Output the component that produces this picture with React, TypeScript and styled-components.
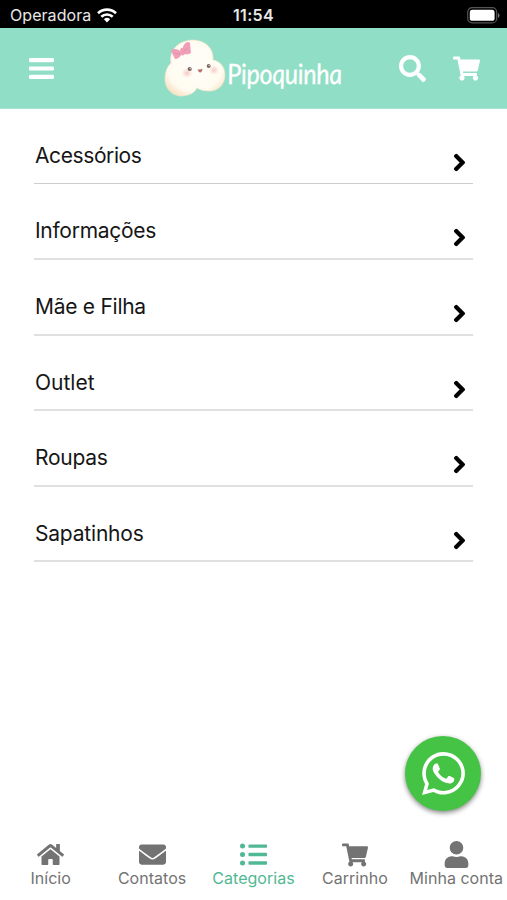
import React from 'react';
import styled, { createGlobalStyle } from 'styled-components';
import { FaSearch, FaShoppingCart, FaHome, FaEnvelope, FaListUl, FaUser, FaWhatsapp, FaChevronRight } from 'react-icons/fa';

const GlobalStyle = createGlobalStyle`
  * { box-sizing: border-box; }
  body { margin: 0; background: #fff; font-family: Inter, "Liberation Sans", sans-serif; }
`;

const Screen = styled.div`
  position: relative;
  display: flex;
  flex-direction: column;
  width: 507px;
  height: 900px;
  overflow: hidden;
  background: #fff;
`;

const StatusBar = styled.div`
  display: grid;
  grid-template-columns: 1fr auto 1fr;
  align-items: center;
  height: 28px;
  padding: 2px 7px 0 10px;
  background: #000;
  color: #e8e8e8;
`;

const Carrier = styled.div`
  display: flex;
  align-items: center;
  gap: 6px;
  font-size: 16px;
  letter-spacing: 0.06px;
`;

const Clock = styled.div`
  font-size: 16px;
  font-weight: 600;
  letter-spacing: 0.35px;
  margin-right: 3px;
`;

const BatterySlot = styled.div`
  display: flex;
  justify-content: flex-end;
`;

const Header = styled.header`
  display: flex;
  align-items: center;
  height: 81px;
  padding: 0 27px 0 28px;
  background: #90dec5;
  border-bottom: 1px solid #a8e5d1;
  color: #fff;
`;

const Logo = styled.div`
  display: flex;
  align-items: center;
  margin-left: 107px;
  flex: 1;
`;

const Wordmark = styled.span`
  font-family: Lato, "Liberation Sans", sans-serif;
  font-size: 28px;
  font-style: italic;
  line-height: 40px;
  letter-spacing: -0.4px;
  white-space: nowrap;
  width: 128px;
  margin: 10px -14px 0 -1px;
  transform-origin: 0 75%;
  transform: scaleX(0.9) skewX(6deg);
  -webkit-text-stroke: 0.3px #fff;
`;

const HeaderActions = styled.div`
  display: flex;
  align-items: center;
  gap: 27px;
`;

const CategoryList = styled.main`
  display: flex;
  flex: 1;
  flex-direction: column;
  padding: 0 34px;
`;

const Category = styled.div`
  display: flex;
  justify-content: space-between;
  height: 75.5px;
  padding: 34px 4px 0 1px;
  border-bottom: 2px solid #e0e0e0;
  color: #161616;

  &:first-child {
    height: 75px;
    border-bottom: 1px solid #cecece;
  }

  &:nth-child(2) {
    height: 76px;
  }
`;

const CategoryName = styled.span<{ $spacing: number }>`
  font-size: 21px;
  line-height: 26px;
  letter-spacing: ${(p) => p.$spacing}px;
`;

const Arrow = styled(FaChevronRight)`
  width: 19px;
  height: 19px;
  margin-top: 10px;
  color: #000;
  overflow: visible;
  stroke: #000;
  stroke-width: 34px;
  stroke-linejoin: round;
`;

const ChatButton = styled.div`
  position: absolute;
  left: 405px;
  top: 736px;
  display: grid;
  place-items: center;
  width: 76px;
  height: 75px;
  border-radius: 50%;
  background: #45c344;
  box-shadow: 0 2px 5px rgba(0, 0, 0, 0.48);
  color: #fff;
`;

const TabBar = styled.nav`
  display: grid;
  grid-template-columns: repeat(5, 1fr);
  height: 67px;
  padding-top: 7px;
`;

const Tab = styled.div<{ $active?: boolean }>`
  display: flex;
  flex-direction: column;
  align-items: center;
  color: ${(p) => (p.$active ? '#51b894' : '#737373')};
`;

const TabIcon = styled.div`
  display: grid;
  place-items: center;
  height: 29px;
`;

const TabLabel = styled.span`
  font-size: 16px;
  line-height: 19px;
  white-space: nowrap;
  letter-spacing: 0.03px;
`;

const MenuIcon = () => (
  <svg width="27" height="27" viewBox="0 0 27 27" fill="#fff">
    <rect x="1" y="3" width="25" height="4.2" rx="1.3" />
    <rect x="1" y="11.4" width="25" height="4.2" rx="1.3" />
    <rect x="1" y="19.8" width="25" height="4.2" rx="1.3" />
  </svg>
);

const Wifi = () => (
  <svg width="20" height="15" viewBox="0 0 20 15">
    <g fill="none" stroke="#fff" strokeWidth="2.7">
      <path d="M1 5.2a13 13 0 0 1 18 0" />
      <path d="M4.3 8.8a8.2 8.2 0 0 1 11.4 0" />
    </g>
    <path d="M6.9 11.2a4.6 4.6 0 0 1 6.2 0L10 14.6z" fill="#fff" />
  </svg>
);

const Battery = () => (
  <svg width="33" height="17" viewBox="0 0 33 17">
    <rect x=".7" y=".7" width="29" height="15.2" rx="4.5" fill="none" stroke="#555" strokeWidth="1.2" />
    <rect x="2.8" y="2.8" width="24.8" height="11" rx="2.6" fill="#fff" />
    <path d="M31 6v5c2-1 2-4 0-5z" fill="#777" />
  </svg>
);

const Popcorn = () => (
  <svg width="67" height="66" viewBox="162 35 67 66" role="img" aria-label="Pipoquinha">
    <defs>
      <radialGradient id="puff" cx=".5" cy=".45" r=".6">
        <stop offset="0" stopColor="#fffef9" />
        <stop offset=".78" stopColor="#fffbf0" />
        <stop offset="1" stopColor="#f8e5c8" />
      </radialGradient>
      <radialGradient id="blush">
        <stop offset="0" stopColor="#f7b9b9" stopOpacity=".8" />
        <stop offset="1" stopColor="#f7c9c5" stopOpacity="0" />
      </radialGradient>
    </defs>
    <path d="M171 63C169 50 178 41 192 40c14 0 22 9 21 20 7 1 12 7 12 15 0 10-8 17-17 16-4 0-8-1-11-3-3 6-10 8-17 8-9-1-15-8-15-17 0-7 2-12 6-16z" fill="url(#puff)" stroke="#f3e4c9" strokeWidth=".7" />
    <ellipse cx="187" cy="73" rx="6" ry="5" fill="url(#blush)" />
    <ellipse cx="214" cy="70" rx="5" ry="5" fill="url(#blush)" />
    <circle cx="189.7" cy="69" r="2.1" fill="#7d6861" />
    <circle cx="208.7" cy="66" r="2" fill="#7d6861" />
    <circle cx="190.2" cy="68.3" r=".6" fill="#fff" />
    <circle cx="209.2" cy="65.3" r=".6" fill="#fff" />
    <path d="M197.5 69.2q2.5 1 5-.7-.4 4-2.3 4-1.8-.4-2.7-3.3z" fill="#b87369" />
    <path d="M180 51c-2-2-7-3-9 0l4 8c3 0 5-2 6-4 2 1 3 0 4-1 2 1 4 0 6-1l-1-10c-3-3-7 2-7 5-1-1-3 0-3 3z" fill="#ef9fb8" />
    <path d="M175 53l5 1.5m4-3l4-4" stroke="#e288a8" strokeWidth=".8" />
  </svg>
);

const categories = [
  { name: 'Acessórios', spacing: -0.4 },
  { name: 'Informações', spacing: -0.28 },
  { name: 'Mãe e Filha', spacing: -0.27 },
  { name: 'Outlet', spacing: 0 },
  { name: 'Roupas', spacing: -0.25 },
  { name: 'Sapatinhos', spacing: -0.2 },
];

const tabs = [
  { name: 'Início', icon: <FaHome size={27} /> },
  { name: 'Contatos', icon: <FaEnvelope size={27} /> },
  { name: 'Categorias', icon: <FaListUl size={27} />, active: true },
  { name: 'Carrinho', icon: <FaShoppingCart size={26} /> },
  { name: 'Minha conta', icon: <FaUser size={27} /> },
];

export default function App() {
  return (
    <>
      <GlobalStyle />
      <Screen>
        <StatusBar>
          <Carrier>Operadora <Wifi /></Carrier>
          <Clock>11:54</Clock>
          <BatterySlot><Battery /></BatterySlot>
        </StatusBar>
        <Header>
          <MenuIcon />
          <Logo>
            <Popcorn />
            <Wordmark>Pipoquinha</Wordmark>
          </Logo>
          <HeaderActions>
            <FaSearch size={27} />
            <FaShoppingCart size={27} />
          </HeaderActions>
        </Header>
        <CategoryList>
          {categories.map((c) => (
            <Category key={c.name}>
              <CategoryName $spacing={c.spacing}>{c.name}</CategoryName>
              <Arrow />
            </Category>
          ))}
        </CategoryList>
        <TabBar>
          {tabs.map((t) => (
            <Tab key={t.name} $active={t.active}>
              <TabIcon>{t.icon}</TabIcon>
              <TabLabel>{t.name}</TabLabel>
            </Tab>
          ))}
        </TabBar>
        <ChatButton><FaWhatsapp size={49} /></ChatButton>
      </Screen>
    </>
  );
}
